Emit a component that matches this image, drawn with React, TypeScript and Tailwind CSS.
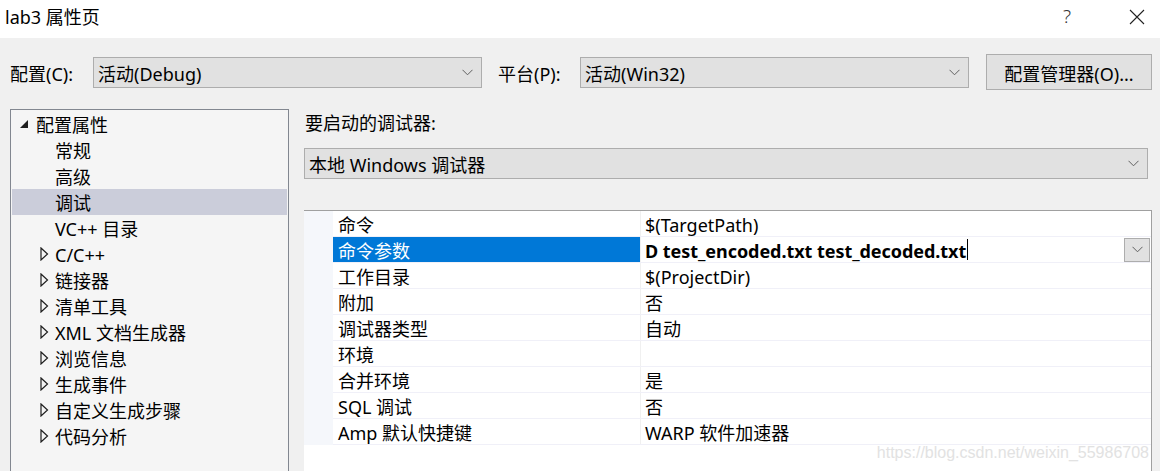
import React from "react";

const FONT = { fontFamily: '"Noto Sans", "Noto Sans CJK SC", sans-serif' };

function Chevron({ className = "" }: { className?: string }) {
  return (
    <svg width="11" height="7" viewBox="0 0 11 7" className={className}>
      <path d="M0.5 0.8 L5.5 5.8 L10.5 0.8" fill="none" stroke="#606060" strokeWidth="1" />
    </svg>
  );
}

function Select({ text, className = "" }: { text: string; className?: string }) {
  return (
    <div className={`flex h-[31px] items-center justify-between border border-[#adadad] bg-[#e1e1e1] pl-[4px] pr-[8px] ${className}`}>
      <span className="pt-[3px] text-[18px] leading-none text-black">{text}</span>
      <Chevron />
    </div>
  );
}

function Expanded() {
  return (
    <svg width="10" height="10" viewBox="0 0 10 10" className="mr-[7px]">
      <path d="M9 1 L9 9 L1 9 Z" fill="#1e1e1e" />
    </svg>
  );
}

function Collapsed() {
  return (
    <svg width="9" height="14" viewBox="0 0 9 14" className="mr-[6px]">
      <path d="M1 1 L7.5 7 L1 13 Z" fill="none" stroke="#1e1e1e" strokeWidth="1.2" />
    </svg>
  );
}

const tree: { label: string; kind: "root" | "leaf" | "group"; selected?: boolean }[] = [
  { label: "配置属性", kind: "root" },
  { label: "常规", kind: "leaf" },
  { label: "高级", kind: "leaf" },
  { label: "调试", kind: "leaf", selected: true },
  { label: "VC++ 目录", kind: "leaf" },
  { label: "C/C++", kind: "group" },
  { label: "链接器", kind: "group" },
  { label: "清单工具", kind: "group" },
  { label: "XML 文档生成器", kind: "group" },
  { label: "浏览信息", kind: "group" },
  { label: "生成事件", kind: "group" },
  { label: "自定义生成步骤", kind: "group" },
  { label: "代码分析", kind: "group" },
];

const props: { name: string; value: string }[] = [
  { name: "命令", value: "$(TargetPath)" },
  { name: "命令参数", value: "D test_encoded.txt test_decoded.txt" },
  { name: "工作目录", value: "$(ProjectDir)" },
  { name: "附加", value: "否" },
  { name: "调试器类型", value: "自动" },
  { name: "环境", value: "" },
  { name: "合并环境", value: "是" },
  { name: "SQL 调试", value: "否" },
  { name: "Amp 默认快捷键", value: "WARP 软件加速器" },
];

export default function App() {
  return (
    <div className="flex h-[471px] w-[1160px] flex-col overflow-hidden bg-[#f0f0f0] text-black" style={FONT}>
      {/* title bar */}
      <div className="flex h-[38px] shrink-0 items-center bg-white pb-[5px] pl-[5px]">
        <span className="text-[18px] leading-none">lab3 属性页</span>
        <span className="ml-auto mr-[58px] text-[19px] font-light leading-none text-[#333]">?</span>
        <svg width="16" height="16" viewBox="0 0 16 16" className="mr-[15px]">
          <path d="M1 1 L15 15 M15 1 L1 15" stroke="#222" strokeWidth="1.1" />
        </svg>
      </div>

      {/* config row */}
      <div className="mt-[16px] flex h-[36px] shrink-0 items-center pl-[10px]">
        <span className="w-[83px] pt-[3px] text-[18px] leading-none">配置(C):</span>
        <Select text="活动(Debug)" className="w-[389px]" />
        <span className="ml-[16px] w-[82px] pt-[3px] text-[18px] leading-none">平台(P):</span>
        <Select text="活动(Win32)" className="w-[389px]" />
        <div className="ml-[17px] flex h-[36px] w-[166px] items-center justify-center border border-[#adadad] bg-[#e1e1e1] pt-[3px] text-[18px] leading-none">
          配置管理器(O)...
        </div>
      </div>

      {/* main */}
      <div className="mt-[19px] flex min-h-0 flex-1">
        {/* tree */}
        <div className="ml-[10px] w-[279px] shrink-0 border border-b-0 border-[#828790] bg-[#f5f5f5] px-[1px] pt-[1px]">
          {tree.map((t) => (
            <div
              key={t.label}
              className={`flex h-[26px] items-center text-[18px] leading-none ${t.selected ? "bg-[#cbcdda]" : ""}`}
            >
              {t.kind === "root" && (
                <div className="flex items-center pl-[7px]">
                  <Expanded />
                </div>
              )}
              {t.kind === "leaf" && <div className="w-[43px]" />}
              {t.kind === "group" && (
                <div className="flex items-center pl-[28px]">
                  <Collapsed />
                </div>
              )}
              <span className="pt-[2px]">{t.label}</span>
            </div>
          ))}
        </div>

        {/* right */}
        <div className="ml-[15px] flex w-[848px] flex-col">
          <div className="flex h-[28px] items-center pl-[1px] text-[18px] leading-none">要启动的调试器:</div>
          <Select text="本地 Windows 调试器" className="mt-[11px] w-[844px]" />
          <div className="mt-[31px] flex-1 border-r border-t border-r-[#a0a0a0] border-t-[#a0a0a0] bg-white">
            <div className="flex">
              <div className="w-[29px] shrink-0 bg-[#f5f7fb]" />
              <div className="flex-1">
                {props.map((p, i) => {
                  const sel = i === 1;
                  return (
                    <div key={p.name} className="flex h-[26px] border-b border-[#f0f0f8] text-[18px] leading-none">
                      <div
                        className={`flex w-[308px] shrink-0 items-center border-r border-[#f0f0f0] pl-[5px] pt-[3px] ${sel ? "bg-[#0078d7] text-white" : ""}`}
                      >
                        {p.name}
                      </div>
                      <div className="flex flex-1 items-center pl-[4px]">
                        {sel ? (
                          <>
                            <span className="pt-[3px] font-bold tracking-[-0.05px]">{p.value}</span>
                            <span className="ml-[1px] h-[21px] w-[1px] bg-black" />
                            <div className="ml-auto mr-[1px] flex h-[24px] w-[26px] items-center justify-center border border-[#adadad] bg-[#e1e1e1]">
                              <Chevron />
                            </div>
                          </>
                        ) : (
                          <span className="pt-[3px]">{p.value}</span>
                        )}
                      </div>
                    </div>
                  );
                })}
              </div>
            </div>
            <div className="flex justify-end pr-[2px]">
              <span className="text-[16px] leading-none text-[#e2e2e2]" style={{ fontFamily: '"Liberation Sans", Arial, sans-serif' }}>
                https://blog.csdn.net/weixin_55986708
              </span>
            </div>
          </div>
        </div>
      </div>
    </div>
  );
}
